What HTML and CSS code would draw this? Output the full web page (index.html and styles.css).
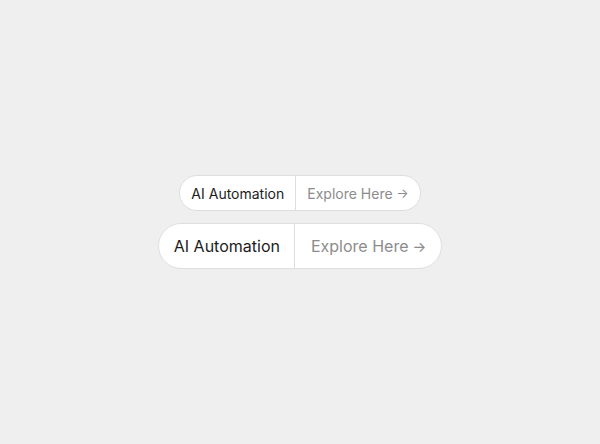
FILE: index.html
```html
<!DOCTYPE html>
<html>
<head>
<meta charset="UTF-8">
<title>AI Automation</title>
<link rel="stylesheet" href="styles.css">
</head>
<body>
  <div id="main">
    <a class="pill pill-sm" href="#">
      <span class="pill-label">AI Automation</span>
      <span class="pill-link">Explore Here <span class="arrow">&rarr;</span></span>
    </a>
    <a class="pill pill-lg" href="#">
      <span class="pill-label">AI Automation</span>
      <span class="pill-link">Explore Here <span class="arrow">&rarr;</span></span>
    </a>
  </div>
</body>
</html>
```

FILE: styles.css
```css
* {
  margin: 0;
  padding: 0;
  box-sizing: border-box;
}

html, body {
  height: 100%;
  background: #efefef;
  font-family: 'Inter', sans-serif;
}

#main {
  height: 100%;
  display: flex;
  flex-direction: column;
  align-items: center;
  justify-content: center;
  gap: 12px;
}

.pill {
  display: flex;
  align-items: stretch;
  background: #fff;
  border: 1px solid #dedede;
  border-radius: 999px;
  text-decoration: none;
  overflow: hidden;
}

.pill-label {
  display: flex;
  align-items: center;
  color: #1c1c1c;
  border-right: 1px solid #dedede;
}

.pill-link {
  display: flex;
  align-items: center;
  gap: 4px;
  color: #8c8c8c;
}

.pill-sm {
  height: 36px;
  font-size: 14px;
}

.pill-sm .pill-label {
  padding: 0 11px 0 11px;
}

.pill-sm .pill-link {
  padding: 0 11px 0 11px;
}

.pill-lg {
  height: 46px;
  font-size: 16px;
}

.pill-lg .pill-label {
  padding: 0 14px 0 15px;
}

.pill-lg .pill-link {
  padding: 0 15px 0 16px;
}

.arrow {
  font-size: 0.9em;
}
```
